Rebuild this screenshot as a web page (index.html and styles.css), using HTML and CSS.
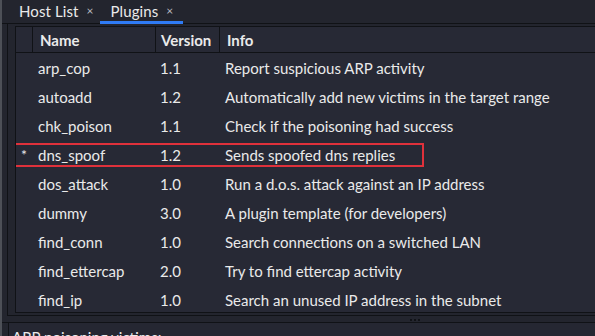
FILE: index.html
```html
<!DOCTYPE html>
<html>
<head>
<meta charset="utf-8">
<link rel="stylesheet" href="styles.css">
</head>
<body>
<div class="app">
  <div class="tabbar">
    <div class="tab"><span class="tab-label">Host List</span><span class="tab-close">×</span></div>
    <div class="tab active"><span class="tab-label">Plugins</span><span class="tab-close">×</span></div>
  </div>
  <div class="frame">
    <div class="table">
      <div class="row head">
        <div class="c mark"></div>
        <div class="c name">Name</div>
        <div class="c ver">Version</div>
        <div class="c info">Info</div>
      </div>
      <div class="row"><div class="c mark"></div><div class="c name">arp_cop</div><div class="c ver">1.1</div><div class="c info">Report suspicious ARP activity</div></div>
      <div class="row"><div class="c mark"></div><div class="c name">autoadd</div><div class="c ver">1.2</div><div class="c info">Automatically add new victims in the target range</div></div>
      <div class="row"><div class="c mark"></div><div class="c name">chk_poison</div><div class="c ver">1.1</div><div class="c info">Check if the poisoning had success</div></div>
      <div class="row selected"><div class="c mark">*</div><div class="c name">dns_spoof</div><div class="c ver">1.2</div><div class="c info">Sends spoofed dns replies</div><div class="highlight"></div></div>
      <div class="row"><div class="c mark"></div><div class="c name">dos_attack</div><div class="c ver">1.0</div><div class="c info">Run a d.o.s. attack against an IP address</div></div>
      <div class="row"><div class="c mark"></div><div class="c name">dummy</div><div class="c ver">3.0</div><div class="c info">A plugin template (for developers)</div></div>
      <div class="row"><div class="c mark"></div><div class="c name">find_conn</div><div class="c ver">1.0</div><div class="c info">Search connections on a switched LAN</div></div>
      <div class="row"><div class="c mark"></div><div class="c name">find_ettercap</div><div class="c ver">2.0</div><div class="c info">Try to find ettercap activity</div></div>
      <div class="row"><div class="c mark"></div><div class="c name">find_ip</div><div class="c ver">1.0</div><div class="c info">Search an unused IP address in the subnet</div></div>
    </div>
  </div>
  <div class="splitter"><span class="dots"></span></div>
  <div class="bottom">ARP poisoning victims:</div>
</div>
</body>
</html>
```
FILE: styles.css
```css
html, body {
  margin: 0;
  padding: 0;
  background: #23252e;
}
body {
  font-family: Lato, "Noto Sans", sans-serif;
  font-size: 15px;
  color: #eaeaea;
  width: 595px;
  height: 336px;
  overflow: hidden;
}
.app {
  height: 336px;
  border-left: 2px solid #4d5057;
  display: flex;
  flex-direction: column;
  box-sizing: border-box;
}
.tabbar {
  height: 24px;
  flex: none;
  display: flex;
  padding-left: 17px;
  border-bottom: 1px solid #101216;
  box-sizing: border-box;
}
.tab {
  display: flex;
  align-items: flex-start;
  padding-top: 3px;
  box-sizing: border-box;
  height: 24px;
  margin-right: 17px;
}
.tab.active {
  padding-left: 10px;
  padding-right: 10px;
  margin-left: -10px;
  border-bottom: 3px solid #2f7bf5;
}
.tab-label {
  line-height: 16px;
  letter-spacing: 0.1px;
}
.tab-close {
  margin-left: 8px;
  font-size: 12px;
  line-height: 16px;
  color: #b8bac0;
}
.frame {
  flex: none;
  height: 292px;
  margin-left: 5px;
  border-left: 1px solid #101216;
  border-bottom: 1px solid #101216;
  padding: 2px 0 2px 7px;
  box-sizing: border-box;
}
.table {
  height: 287px;
  border: 1px solid #101216;
  border-right: none;
  background: #272935;
  overflow: hidden;
  position: relative;
  box-sizing: border-box;
}
.row {
  display: flex;
  height: 29px;
  align-items: center;
}
.row.head {
  height: 26px;
  border-bottom: 1px solid #101216;
  box-sizing: border-box;
  font-weight: bold;
  align-items: stretch;
}
.row.selected {
  position: relative;
}
.row.head .c {
  display: flex;
  align-items: center;
  border-right: 1px solid #101216;
}
.row.head .c.info {
  border-right: none;
}
.c {
  box-sizing: border-box;
  white-space: nowrap;
}
.mark {
  width: 17px;
  padding-left: 5px;
  font-size: 14px;
}
.name {
  width: 123px;
  padding-left: 7px;
}
.ver {
  width: 64px;
  padding-left: 5px;
}
.info {
  flex: 1;
  padding-left: 7px;
}
.row:not(.head) .name { padding-left: 5px; }
.row:not(.head) .ver { padding-left: 4px; }
.row:not(.head) .info { padding-left: 5px; }
.highlight {
  position: absolute;
  z-index: 2;
  left: -3px;
  top: 3px;
  width: 411px;
  height: 24px;
  border: 2px solid #df313b;
  box-sizing: border-box;
  pointer-events: none;
}
.splitter {
  flex: none;
  height: 6px;
  border-bottom: 1px solid #101216;
  position: relative;
}
.dots {
  position: absolute;
  left: 408px;
  top: 3px;
  width: 2px;
  height: 2px;
  background: #101216;
  box-shadow: 4px 0 0 #101216, 8px 0 0 #101216;
}
.bottom {
  flex: 1;
  margin-left: 6px;
  border-left: 1px solid #101216;
  padding: 6px 0 0 3px;
  background: #252732;
  line-height: 16px;
}
```
